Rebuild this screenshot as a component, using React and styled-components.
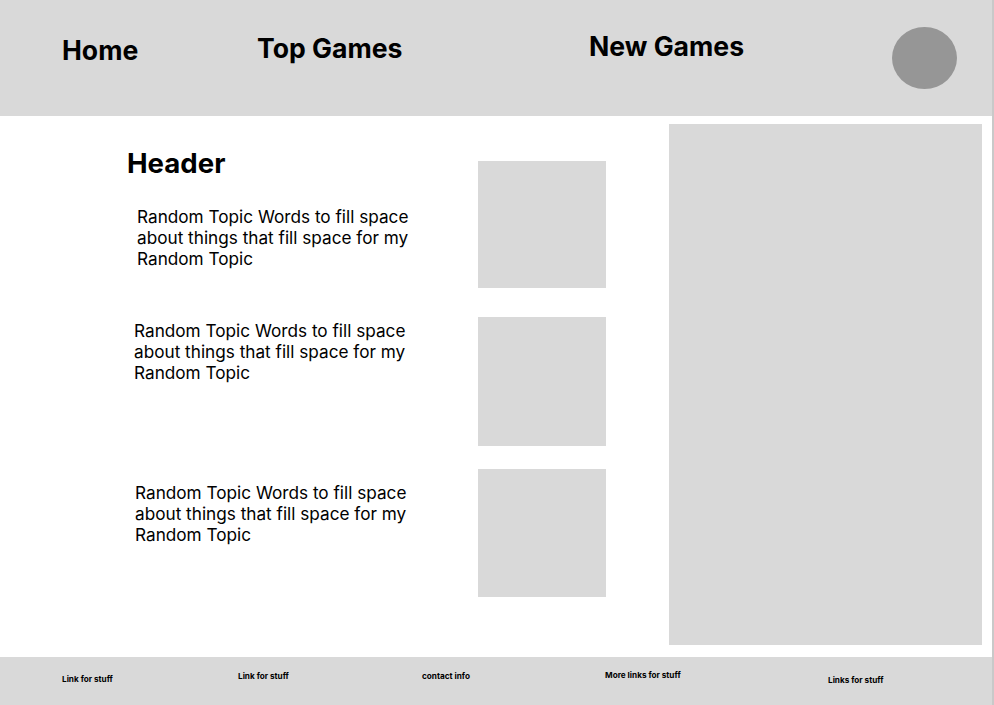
import styled, { createGlobalStyle } from 'styled-components';

const GlobalStyle = createGlobalStyle`
    * {
        box-sizing: border-box;
    }
    body {
        margin: 0;
        background: #FFF;
        font-family: Inter, "Noto Sans", sans-serif;
        color: #000;
    }
`

const Pagina = styled.div`
    width: 994px;
    height: 705px;
    display: flex;
    flex-direction: column;
    border-right: 2px solid #C9C9C9;
`

const Cabecalho = styled.header`
    height: 116px;
    background: #D9D9D9;
    display: grid;
    grid-template-columns: 195px 332px 303px auto;
    padding-left: 62px;
`

const ItemNav = styled.a`
    font-size: 26.6px;
    font-weight: 700;
    line-height: 34px;
    margin-top: ${props => props.topo}px;
    white-space: nowrap;
    cursor: pointer;
`

const Avatar = styled.div`
    width: 65px;
    height: 62px;
    border-radius: 50%;
    background: #969696;
    margin-top: 27px;
`

const Conteudo = styled.main`
    flex: 1;
    display: flex;
    padding: 8px 10px 12px 127px;
`

const ColunaTexto = styled.section`
    width: 351px;
    display: flex;
    flex-direction: column;
`

const Titulo = styled.h2`
    margin: 22px 0 0;
    font-size: 27.6px;
    font-weight: 700;
    line-height: 34px;
`

const Paragrafo = styled.p`
    margin: ${props => props.topo}px 0 0 ${props => props.recuo}px;
    width: 300px;
    font-size: 17.2px;
    font-weight: 400;
    line-height: 21px;
`

const ColunaImagens = styled.div`
    width: 128px;
    display: flex;
    flex-direction: column;
`

const Imagem = styled.div`
    width: 128px;
    height: ${props => props.altura}px;
    margin-top: ${props => props.topo}px;
    background: #D9D9D9;
`

const Lateral = styled.aside`
    margin-left: 63px;
    flex: 1;
    background: #D9D9D9;
`

const Rodape = styled.footer`
    height: 48px;
    background: #D9D9D9;
    display: grid;
    grid-template-columns: 176px 184px 183px 223px auto;
    padding-left: 62px;
`

const LinkRodape = styled.a`
    font-size: 8.2px;
    font-weight: 700;
    line-height: 10px;
    margin-top: ${props => props.topo}px;
    white-space: nowrap;
    cursor: pointer;
`

const textoPadrao = 'Random Topic Words to fill space about things that fill space for my Random Topic'

const paragrafos = [
  { topo: 26, recuo: 10 },
  { topo: 51, recuo: 7 },
  { topo: 99, recuo: 8 },
]

const imagens = [
  { topo: 37, altura: 127 },
  { topo: 29, altura: 129 },
  { topo: 23, altura: 128 },
]

const links = [
  { texto: 'Link for stuff', topo: 17 },
  { texto: 'Link for stuff', topo: 14 },
  { texto: 'contact info', topo: 14 },
  { texto: 'More links for stuff', topo: 13 },
  { texto: 'Links for stuff', topo: 18 },
]

function App() {
  return (
    <Pagina>
      <GlobalStyle />
      <Cabecalho>
        <ItemNav topo={32.5}>Home</ItemNav>
        <ItemNav topo={30.5}>Top Games</ItemNav>
        <ItemNav topo={28.5}>New Games</ItemNav>
        <Avatar />
      </Cabecalho>
      <Conteudo>
        <ColunaTexto>
          <Titulo>Header</Titulo>
          {paragrafos.map((p, i) => (
            <Paragrafo key={i} topo={p.topo} recuo={p.recuo}>{textoPadrao}</Paragrafo>
          ))}
        </ColunaTexto>
        <ColunaImagens>
          {imagens.map((img, i) => (
            <Imagem key={i} topo={img.topo} altura={img.altura} />
          ))}
        </ColunaImagens>
        <Lateral />
      </Conteudo>
      <Rodape>
        {links.map((l, i) => (
          <LinkRodape key={i} topo={l.topo}>{l.texto}</LinkRodape>
        ))}
      </Rodape>
    </Pagina>
  )
}

export default App;
